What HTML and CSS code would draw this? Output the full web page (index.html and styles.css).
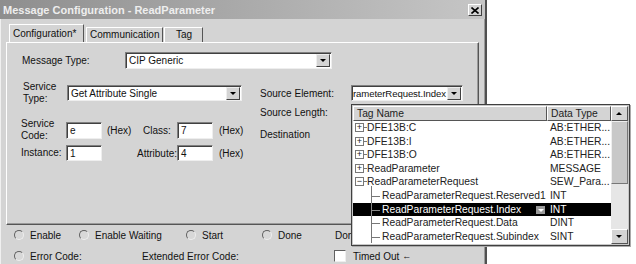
FILE: index.html
```html
<!DOCTYPE html>
<html lang="en">
<head>
  <meta charset="UTF-8">
  <title>Message Configuration - ReadParameter</title>
  <link rel="stylesheet" href="styles.css">
</head>
<body>

  <div class="dialog">
    <div class="titlebar">
      <span class="title">Message Configuration - ReadParameter</span>
      <span class="close">
        <svg width="8" height="7" viewBox="0 0 8 7"><path d="M0.5 0.5 L7.5 6.5 M7.5 0.5 L0.5 6.5" stroke="#000" stroke-width="1.6"/></svg>
      </span>
    </div>

    <div class="tabs">
      <span class="tab active">Configuration*</span>
      <span class="tab">Communication</span>
      <span class="tab tag">Tag</span>
    </div>

    <div class="panel">
      <div class="row msgtype">
        <span class="lbl-msg">Message Type:</span>
        <div class="combo combo-msg"><span class="val">CIP Generic</span><span class="drop"></span></div>
      </div>

      <div class="cols">
        <div class="left">
          <div class="row svc-type">
            <span class="lbl2">Service<br>Type:</span>
            <div class="combo combo-svc"><span class="val">Get Attribute Single</span><span class="drop"></span></div>
          </div>
          <div class="row svc-code">
            <span class="lbl2">Service<br>Code:</span>
            <span class="field">e</span>
            <span class="hex">(Hex)</span>
            <span class="lbl-mid">Class:</span>
            <span class="field">7</span>
            <span class="hex2">(Hex)</span>
          </div>
          <div class="row instance">
            <span class="lbl2">Instance:</span>
            <span class="field">1</span>
            <span class="hex"></span>
            <span class="lbl-mid attr">Attribute:</span>
            <span class="field">4</span>
            <span class="hex2">(Hex)</span>
          </div>
        </div>

        <div class="right">
          <div class="row src-el">
            <span class="lbl-src">Source Element:</span>
            <div class="combo combo-src"><span class="val">rameterRequest.Index</span><span class="drop"></span></div>
          </div>
          <div class="src-len">Source Length:</div>
          <div class="dest">Destination</div>
        </div>
      </div>
    </div>

    <div class="status">
      <div class="srow">
        <span class="item w1"><i class="radio"></i>Enable</span>
        <span class="item w2"><i class="radio"></i>Enable Waiting</span>
        <span class="item w3"><i class="radio"></i>Start</span>
        <span class="item w4"><i class="radio"></i>Done</span>
        <span class="item cut">Done Length: 0</span>
      </div>
      <div class="srow">
        <span class="item w5"><i class="radio"></i>Error Code:</span>
        <span class="item w6">Extended Error Code:</span>
        <span class="item"><i class="check"></i>Timed Out <span class="arrow">&#8592;</span></span>
      </div>
    </div>
  </div>

  <div class="popup">
    <div class="list">
      <div class="head">
        <span class="hname">Tag Name</span>
        <span class="htype">Data Type</span>
      </div>
      <div class="trow"><span class="name"><i class="box">+</i>DFE13B:C</span><span class="type">AB:ETHER...</span></div>
      <div class="trow"><span class="name"><i class="box">+</i>DFE13B:I</span><span class="type">AB:ETHER...</span></div>
      <div class="trow"><span class="name"><i class="box">+</i>DFE13B:O</span><span class="type">AB:ETHER...</span></div>
      <div class="trow"><span class="name"><i class="box">+</i>ReadParameter</span><span class="type">MESSAGE</span></div>
      <div class="trow"><span class="name parent"><i class="box">&minus;</i>ReadParameterRequest</span><span class="type">SEW_Para...</span></div>
      <div class="trow"><span class="name child">ReadParameterRequest.Reserved1</span><span class="type">INT</span></div>
      <div class="trow selected"><span class="name child">ReadParameterRequest.Index<i class="mini-drop"></i></span><span class="type">INT</span></div>
      <div class="trow"><span class="name child">ReadParameterRequest.Data</span><span class="type">DINT</span></div>
      <div class="trow"><span class="name child">ReadParameterRequest.Subindex</span><span class="type">SINT</span></div>
    </div>
    <div class="scrollbar">
      <span class="sbtn up"></span>
      <span class="thumb"></span>
      <span class="track"></span>
      <span class="sbtn down"></span>
    </div>
  </div>

</body>
</html>
```

FILE: styles.css
```css
body {
  margin: 0;
  background-color: #fff;
  font-family: 'Liberation Sans', Arial, sans-serif;
  font-size: 10px;
  color: #111;
  width: 636px;
  height: 264px;
  overflow: hidden;
  position: relative;
}

.dialog {
  width: 485px;
  height: 264px;
  background-color: #d4d4d4;
  border-right: 2px solid #505050;
  box-shadow: inset -1px 0 #9a9a9a, inset 1px 0 #f0f0f0;
}

/* title bar */
.titlebar {
  height: 19px;
  display: flex;
  align-items: center;
  justify-content: space-between;
  padding: 0 3px 0 3px;
  background: linear-gradient(to right, #8e8e8e, #c6c6c6);
}

.title {
  color: #eee;
  font-weight: bold;
  font-size: 11px;
}

.close {
  width: 12px;
  height: 10px;
  background-color: #d4d4d4;
  border: 1px solid;
  border-color: #fff #404040 #404040 #fff;
  display: flex;
  align-items: center;
  justify-content: center;
  margin-top: 1px;
}

/* tabs */
.tabs {
  display: flex;
  align-items: flex-end;
  padding-left: 9px;
  margin-top: 5px;
  height: 18px;
}

.tab {
  height: 14px;
  line-height: 14px;
  padding: 0 3px;
  border: 1px solid;
  border-color: #fff #555 transparent #fff;
  border-bottom: none;
  margin-right: 1px;
}

.tab.active {
  height: 17px;
  line-height: 17px;
  width: 67px;
  margin-right: 2px;
}

.tab.tag {
  width: 31px;
  text-align: center;
}

/* main panel */
.panel {
  margin: 0 6px 0 6px;
  height: 183px;
  border: 1px solid;
  border-color: #fff #555 #555 #fff;
  box-shadow: inset -1px -1px #9a9a9a;
  padding: 9px 0 0 15px;
  box-sizing: border-box;
}

.row {
  display: flex;
  align-items: center;
}

.lbl-msg {
  width: 103px;
}

.combo {
  display: flex;
  align-items: center;
  background-color: #fff;
  border: 1px solid;
  border-color: #808080 #eee #eee #808080;
  box-shadow: inset 1px 1px #404040;
  box-sizing: border-box;
}

.combo .val {
  flex: 1;
  padding-left: 3px;
  white-space: nowrap;
  overflow: hidden;
}

.combo .drop {
  width: 14px;
  height: 13px;
  flex-shrink: 0;
  background-color: #d4d4d4;
  border: 1px solid;
  border-color: #eee #404040 #404040 #eee;
  box-sizing: border-box;
  position: relative;
  margin-right: 1px;
}

.combo .drop::after {
  content: '';
  position: absolute;
  left: 3px;
  top: 4px;
  border-left: 3px solid transparent;
  border-right: 3px solid transparent;
  border-top: 3px solid #000;
}

.combo-msg {
  width: 207px;
  height: 17px;
}

.combo-svc {
  width: 175px;
  height: 16px;
}

.combo-src {
  width: 112px;
  height: 16px;
}

.combo-src .val {
  padding-left: 1px;
  font-size: 9.6px;
  letter-spacing: -0.1px;
}

.cols {
  display: flex;
  margin-top: 12px;
}

.left {
  width: 236px;
  flex-shrink: 0;
  margin-left: -1px;
}

.lbl2 {
  width: 45px;
  line-height: 12px;
}

.svc-type .lbl2 {
  padding-left: 2px;
  width: 44px;
}

.svc-code {
  margin-top: 13px;
}

.instance {
  margin-top: 3px;
}

.field {
  width: 36px;
  height: 16px;
  line-height: 16px;
  background-color: #fff;
  border: 1px solid;
  border-color: #808080 #eee #eee #808080;
  box-shadow: inset 1px 1px #404040;
  box-sizing: border-box;
  padding-left: 3px;
}

.svc-code .field {
  height: 17px;
}

.hex {
  width: 30px;
  padding-left: 5px;
}

.lbl-mid {
  width: 34px;
  padding-left: 6px;
}

.lbl-mid.attr {
  width: 40px;
  padding-left: 0;
}

.hex2 {
  padding-left: 6px;
}

.right {
  flex-shrink: 0;
  padding: 4px 0 0 3px;
}

.lbl-src {
  width: 91px;
}

.src-len {
  margin-top: 5px;
  line-height: 14px;
}

.dest {
  margin-top: 8px;
  line-height: 14px;
}

/* status area */
.status {
  padding: 3px 0 0 14px;
}

.srow {
  display: flex;
  align-items: center;
  height: 14px;
  margin-bottom: 7px;
  white-space: nowrap;
}

.item {
  display: flex;
  align-items: center;
}

.item.cut {
  width: 16px;
  overflow: hidden;
}

.w1 { width: 65px; }
.w2 { width: 107px; }
.w3 { width: 76px; }
.w4 { width: 73px; }
.w5 { width: 128px; }
.w6 { width: 192px; }

.radio {
  width: 8px;
  height: 8px;
  border-radius: 50%;
  border: 1px solid;
  border-color: #606060 #eee #eee #606060;
  background-color: #d8d8d8;
  margin-right: 6px;
}

.check {
  width: 10px;
  height: 10px;
  background-color: #fff;
  border: 1px solid;
  border-color: #606060 #eee #eee #606060;
  margin-right: 7px;
}

.arrow {
  font-size: 9px;
  font-weight: bold;
  margin-left: 3px;
}

/* tag browser drop-down */
.popup {
  position: absolute;
  left: 351px;
  top: 104px;
  width: 279px;
  height: 142px;
  box-sizing: border-box;
  border: 1px solid #404040;
  padding: 1px;
  background-color: #c8c8c8;
  display: flex;
  box-shadow: 1px 1px #aaa;
  font-size: 10.3px;
  color: #222;
}

.list {
  flex: 1;
  background-color: #fff;
  overflow: hidden;
}

.head {
  display: flex;
  height: 15px;
  background-color: #d4d4d4;
}

.head span {
  border: 1px solid;
  border-color: #fff #555 #555 #fff;
  box-sizing: border-box;
  line-height: 13px;
  padding-left: 3px;
}

.hname {
  width: 194px;
}

.htype {
  flex: 1;
}

.trow {
  display: flex;
  height: 13.6px;
  line-height: 13.6px;
  white-space: nowrap;
}

.trow .name {
  width: 194px;
  flex-shrink: 0;
  position: relative;
  display: flex;
  align-items: center;
  padding-left: 14px;
  box-sizing: border-box;
  overflow: hidden;
}

.trow .type {
  flex: 1;
  padding-left: 3px;
}

.box {
  position: absolute;
  left: 2px;
  top: 2px;
  width: 7px;
  height: 7px;
  border: 1px solid #777;
  background-color: #fff;
  font-style: normal;
  font-size: 9px;
  line-height: 7px;
  text-align: center;
  color: #222;
}

.box::after {
  content: '';
  position: absolute;
  left: 8px;
  top: 3px;
  width: 3px;
  border-top: 1px solid #777;
}

.name.child {
  padding-left: 29px;
}

.name.child::before {
  content: '';
  position: absolute;
  left: 18px;
  top: 0;
  bottom: 0;
  border-left: 1px solid #777;
}

.name.child::after {
  content: '';
  position: absolute;
  left: 18px;
  top: 7px;
  width: 9px;
  border-top: 1px solid #777;
}

.name.parent::before {
  content: '';
  position: absolute;
  left: 18px;
  top: 11px;
  bottom: 0;
  border-left: 1px solid #777;
}

.trow.selected {
  background-color: #000;
  color: #fff;
}

.trow.selected .name::before,
.trow.selected .name::after {
  border-color: #888;
}

.mini-drop {
  position: absolute;
  left: 183px;
  top: 3px;
  width: 9px;
  height: 8px;
  background-color: #9a9a9a;
}

.mini-drop::after {
  content: '';
  position: absolute;
  left: 2px;
  top: 3px;
  border-left: 3px solid transparent;
  border-right: 3px solid transparent;
  border-top: 3px solid #fff;
}

.scrollbar {
  width: 17px;
  display: flex;
  flex-direction: column;
  background-color: #e6e6e6;
}

.sbtn {
  height: 15px;
  background-color: #d4d4d4;
  border: 1px solid;
  border-color: #fff #555 #555 #fff;
  box-sizing: border-box;
  position: relative;
}

.sbtn::after {
  content: '';
  position: absolute;
  left: 4px;
  top: 5px;
  border-left: 3px solid transparent;
  border-right: 3px solid transparent;
}

.sbtn.up::after {
  border-bottom: 3px solid #000;
}

.sbtn.down::after {
  border-top: 3px solid #000;
}

.thumb {
  height: 63px;
  background-color: #c8c8c8;
  border: 1px solid;
  border-color: #eee #777 #777 #eee;
  box-sizing: border-box;
}

.track {
  flex: 1;
}
```
